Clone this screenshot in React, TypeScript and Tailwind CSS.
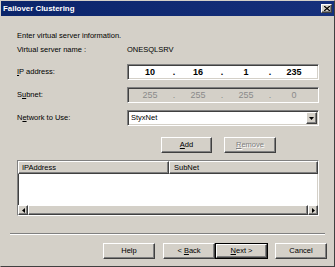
import React from "react";

const raised =
  "bg-[#d4d0c8] border border-t-white border-l-white border-r-[#404040] border-b-[#404040] shadow-[inset_-1px_-1px_0_#808080,inset_1px_1px_0_#d4d0c8]";
const sunken =
  "border border-t-[#808080] border-l-[#808080] border-r-white border-b-white shadow-[inset_1px_1px_0_#404040,inset_-1px_-1px_0_#d4d0c8]";
const etched = "text-[#808080] [text-shadow:1px_1px_0_#ffffff]";

function Btn({
  children,
  w,
  disabled,
  isDefault,
}: {
  children: React.ReactNode;
  w: string;
  disabled?: boolean;
  isDefault?: boolean;
}) {
  const inner = (
    <div
      className={`${raised} h-full w-full flex items-center justify-center ${
        disabled ? etched : "text-black"
      }`}
    >
      <span className="whitespace-pre">{children}</span>
    </div>
  );
  if (isDefault) {
    return <div className={`${w} h-[16px] border border-black`}>{inner}</div>;
  }
  return <div className={`${w} h-[16px]`}>{inner}</div>;
}

function IpBox({
  parts,
  disabled,
}: {
  parts: string[];
  disabled?: boolean;
}) {
  const num = disabled
    ? "text-[#8a8a8a] text-[9px]"
    : "text-black font-bold text-[9px]";
  return (
    <div
      className={`${sunken} w-[192px] h-[16px] flex items-center ${
        disabled ? "bg-[#d4d0c8]" : "bg-white"
      }`}
    >
      {parts.map((p, i) => (
        <React.Fragment key={i}>
          <div className={`w-[44px] text-center leading-[12px] ${num}`}>{p}</div>
          {i < 3 && (
            <div className={`w-[4px] text-center leading-[12px] ${num}`}>.</div>
          )}
        </React.Fragment>
      ))}
    </div>
  );
}

export default function App() {
  return (
    <div className="w-[335px] h-[267px] bg-[#d4d0c8] border border-t-[#d4d0c8] border-l-[#d4d0c8] border-r-[#404040] border-b-[#404040] flex flex-col font-['Liberation_Sans',Arial,sans-serif] text-[7.5px] leading-[10px] text-black overflow-hidden">
      {/* title bar */}
      <div className="h-[15px] bg-gradient-to-r from-[#0a246a] to-[#16307c] flex items-center justify-between pl-[2px] pr-[2px]">
        <span className="text-white font-bold text-[7.9px] leading-[10px]">
          Failover Clustering
        </span>
        <div className={`${raised} w-[11px] h-[9px] flex items-center justify-center`}>
          <svg width="6" height="5" viewBox="0 0 6 5">
            <path d="M0 0 L6 5 M6 0 L0 5" stroke="#000" strokeWidth="1.3" />
          </svg>
        </div>
      </div>

      <div className="pl-[16px] pr-[15px] flex flex-col">
        <div className="mt-[15px]">Enter virtual server information.</div>
        <div className="mt-[4px] flex">
          <span className="w-[110px]">Virtual server name :</span>
          <span>ONESQLSRV</span>
        </div>

        <div className="mt-[9px] flex items-center">
          <span className="w-[110px]">
            <span className="underline">I</span>P address:
          </span>
          <IpBox parts={["10", "16", "1", "235"]} />
        </div>

        <div className="mt-[7px] flex items-center">
          <span className="w-[110px]">
            S<span className="underline">u</span>bnet:
          </span>
          <IpBox parts={["255", "255", "255", "0"]} disabled />
        </div>

        <div className="mt-[7px] flex items-center">
          <span className="w-[110px]">
            N<span className="underline">e</span>twork to Use:
          </span>
          <div className={`${sunken} w-[192px] h-[16px] bg-white flex items-center justify-between pl-[3px] pr-[1px]`}>
            <span>StyxNet</span>
            <div className={`${raised} w-[11px] h-[12px] flex items-center justify-center`}>
              <svg width="5" height="3" viewBox="0 0 5 3">
                <path d="M0 0 H5 L2.5 3 Z" fill="#000" />
              </svg>
            </div>
          </div>
        </div>

        <div className="mt-[11px] flex pl-[144px] gap-[12px]">
          <Btn w="w-[51px]">
            <span className="underline">A</span>dd
          </Btn>
          <Btn w="w-[52px]" disabled>
            <span className="underline">R</span>emove
          </Btn>
        </div>

        <div className={`${sunken} mt-[7px] h-[56px] bg-white flex flex-col`}>
          <div className="flex h-[13px]">
            <div className={`${raised} w-[151px] h-full pl-[3px] flex items-center`}>
              IPAddress
            </div>
            <div className={`${raised} flex-1 h-full pl-[4px] flex items-center`}>
              SubNet
            </div>
          </div>
          <div className="flex-1" />
          <div className="h-[10px] flex bg-[#e4e2dc]">
            <div className={`${raised} w-[10px] h-full flex items-center justify-center`}>
              <svg width="3" height="5" viewBox="0 0 3 5">
                <path d="M3 0 V5 L0 2.5 Z" fill="#000" />
              </svg>
            </div>
            <div className={`${raised} flex-1 h-full`} />
            <div className={`${raised} w-[10px] h-full flex items-center justify-center`}>
              <svg width="3" height="5" viewBox="0 0 3 5">
                <path d="M0 0 V5 L3 2.5 Z" fill="#000" />
              </svg>
            </div>
          </div>
        </div>
      </div>

      <div className="mt-[17px] mx-[9px] border-t border-b border-t-[#808080] border-b-white" />

      <div className="mt-[8px] flex justify-end pr-[7px]">
        <Btn w="w-[52px]">Help</Btn>
        <div className="w-[8px]" />
        <Btn w="w-[52px]">
          {"< "}
          <span className="underline">B</span>ack
        </Btn>
        <Btn w="w-[53px]" isDefault>
          <span className="underline">N</span>ext {">"}
        </Btn>
        <div className="w-[7px]" />
        <Btn w="w-[52px]">Cancel</Btn>
      </div>
    </div>
  );
}
